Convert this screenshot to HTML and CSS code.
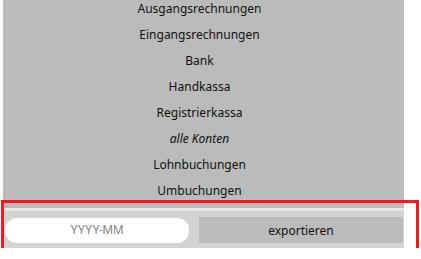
FILE: index.html
```html
<!DOCTYPE html>
<html lang="de">
<head>
<meta charset="utf-8">
<title>Export</title>
<link rel="stylesheet" href="styles.css">
</head>
<body>
<div class="wrap">
  <div class="panel">
    <ul class="list">
      <li>Ausgangsrechnungen</li>
      <li>Eingangsrechnungen</li>
      <li>Bank</li>
      <li>Handkassa</li>
      <li>Registrierkassa</li>
      <li class="all">alle Konten</li>
      <li>Lohnbuchungen</li>
      <li>Umbuchungen</li>
    </ul>
  </div>
  <div class="footer">
    <input class="month" type="text" placeholder="YYYY-MM">
    <button class="export" type="button">exportieren</button>
  </div>
  <div class="highlight"></div>
</div>
</body>
</html>
```
FILE: styles.css
```css
html, body {
  margin: 0;
  padding: 0;
  background: #ffffff;
}
body {
  font-family: "Noto Sans", "Open Sans", sans-serif;
  color: #111111;
  overflow: hidden;
}
.wrap {
  position: relative;
  width: 401px;
  margin-left: 3px;
}
.panel {
  background: #bbbbbb;
  padding: 0 8px 4px 0;
  border-bottom: 3px solid #e8e8e8;
}
.list {
  list-style: none;
  margin: -4px 0 0 0;
  padding: 0;
}
.list li {
  height: 26px;
  line-height: 26px;
  font-size: 12px;
  text-align: center;
}
.list li.all {
  font-style: italic;
}
.footer {
  display: flex;
  align-items: center;
  gap: 10px;
  background: #d3d3d3;
  padding: 6px 1px 5px 2px;
}
.month {
  box-sizing: border-box;
  width: 184px;
  height: 25px;
  border: none;
  border-radius: 12px;
  background: #ffffff;
  padding: 0 8px;
  font-family: Roboto, "Liberation Sans", sans-serif;
  font-size: 12px;
  text-align: center;
  outline: none;
}
.month::placeholder {
  color: #8a8a8a;
}
.export {
  flex: 1;
  height: 26px;
  border: none;
  border-radius: 0;
  background: #bcbcbc;
  font-family: "Noto Sans", "Open Sans", sans-serif;
  font-size: 12px;
  color: #111111;
  padding: 0;
}
.highlight {
  position: absolute;
  left: -2px;
  top: 204px;
  width: 418px;
  height: 53px;
  box-sizing: border-box;
  border: 3px solid #ec1c24;
  pointer-events: none;
}
```
